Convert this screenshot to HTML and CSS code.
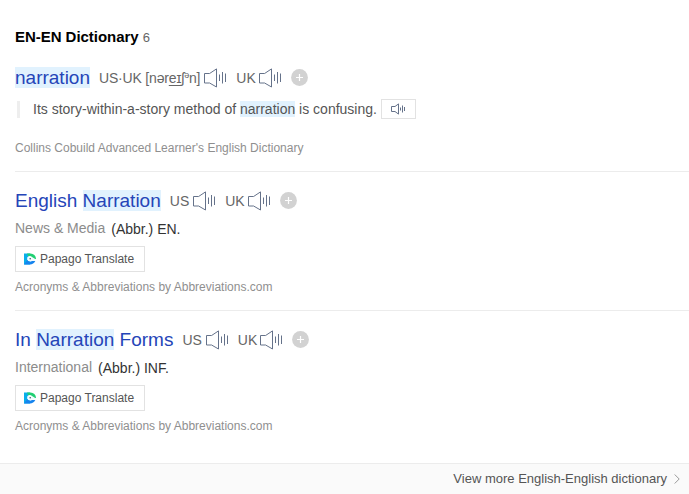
FILE: index.html
```html
<!DOCTYPE html>
<html lang="en">
<head>
<meta charset="utf-8">
<title>EN-EN Dictionary</title>
<link rel="stylesheet" href="styles.css">
</head>
<body>
<svg class="defs" aria-hidden="true">
  <symbol id="speaker" viewBox="0 0 23 20"><path d="M12.500 .9V19L5.600 15H.5V5.500h5.100z M15.500 6.500v6.500M18.500 4v11.500M21.500 5.500v8.500"/></symbol>
  <symbol id="speaker-small" viewBox="0 0 15 12"><path d="M7.500 .9v10.200L4 8.500H.5v-5H4zM9.500 4.500v3M11.500 2.500v7M13.500 4v4"/></symbol>
  <symbol id="plus" viewBox="0 0 17 17"><circle cx="8.500" cy="8.500" r="8.400" fill="#d2d2d2"/><path d="M8.500 5v7M5 8.500h7" stroke="#fff" stroke-width="1.200"/></symbol>
  <symbol id="papago" viewBox="0 0 12 12"><path d="M0 .5h6v11H0z" fill="#08aeea"/><path d="M3 .5h3.500A5.500 5.500 0 0 1 12 6H7L4 3z" fill="#20cf72"/><path d="M3.200 4.500A3 3 0 0 1 8 4l4 2.500v1H8a3 3 0 0 1-4.800-.5z" fill="#f2fcff"/><path d="M3.200 7a3.500 3.500 0 0 0 4.800 1h3.300c-1 2.200-3 3.500-5.300 3.500H0z" fill="#1684ee"/><circle cx="6.200" cy="5.700" r=".8" fill="#456"/></symbol>
</svg>
<main class="dictionary">
  <h2 class="heading">EN-EN Dictionary <span class="count">6</span></h2>
  <section class="entry first">
    <div class="title-row">
      <a class="word"><mark>narration</mark></a>
      <span class="accent phonetic">US·UK [nər<u>eɪ</u>ʃ<sup>ə</sup>n]</span><svg class="speaker"><use href="#speaker"/></svg>
      <span class="accent uk">UK</span><svg class="speaker"><use href="#speaker"/></svg>
      <svg class="plus"><use href="#plus"/></svg>
    </div>
    <div class="example"><span class="quote"></span><p>Its story-within-a-story method of <mark>narration</mark> is confusing.</p><span class="listen"><svg><use href="#speaker-small"/></svg></span></div>
    <p class="source">Collins Cobuild Advanced Learner's English Dictionary</p>
  </section>
  <section class="entry">
    <div class="title-row">
      <a class="word">English <mark>Narration</mark></a>
      <span class="accent">US</span><svg class="speaker"><use href="#speaker"/></svg>
      <span class="accent uk">UK</span><svg class="speaker"><use href="#speaker"/></svg>
      <svg class="plus"><use href="#plus"/></svg>
    </div>
    <p class="meaning"><span class="topic">News &amp; Media</span><span>(Abbr.) EN.</span></p>
    <a class="translate"><svg><use href="#papago"/></svg>Papago Translate</a>
    <p class="source">Acronyms &amp; Abbreviations by Abbreviations.com</p>
  </section>
  <section class="entry">
    <div class="title-row">
      <a class="word">In <mark>Narration</mark> Forms</a>
      <span class="accent">US</span><svg class="speaker"><use href="#speaker"/></svg>
      <span class="accent uk">UK</span><svg class="speaker"><use href="#speaker"/></svg>
      <svg class="plus"><use href="#plus"/></svg>
    </div>
    <p class="meaning"><span class="topic">International</span><span>(Abbr.) INF.</span></p>
    <a class="translate"><svg><use href="#papago"/></svg>Papago Translate</a>
    <p class="source">Acronyms &amp; Abbreviations by Abbreviations.com</p>
  </section>
</main>
<footer class="more"><span>View more English-English dictionary</span><svg viewBox="0 0 6 10"><path d="M.7.5 5.2 5 .7 9.5"/></svg></footer>
</body>
</html>
```
FILE: styles.css
```css
* { box-sizing: border-box; }
body { margin: 0; height: 494px; overflow: hidden; background: #fff; color: #333; font: 14px/20px "Liberation Sans", Arial, sans-serif; display: flex; flex-direction: column; }
p, h2 { margin: 0; }
svg { display: block; flex: none; }
.defs { position: absolute; width: 0; height: 0; }
mark { color: inherit; background: #e1f2fe; }
.dictionary { height: 463px; flex: none; padding: 27px 0 0 15px; }
.heading { color: #000; font-size: 15px; line-height: 20px; letter-spacing: -.04px; }
.count { color: #666; font-size: 13px; font-weight: 400; }
.entry { height: 139px; border-top: 1px solid #ececec; padding-top: 18px; }
.entry.first { height: 124px; border-top: 0; padding-top: 20px; margin-top: -1px; }
.title-row { display: flex; align-items: center; height: 22px; white-space: nowrap; }
.word { color: #2545b8; font-size: 19px; line-height: 22px; margin-right: 9px; }
.accent { color: #666; line-height: 20px; margin-right: 4px; }
.uk { margin: 0 3px 0 9px; }
.phonetic { letter-spacing: -.18px; }
.phonetic sup { font-size: 9px; line-height: 0; vertical-align: 5px; }
.phonetic u { text-underline-offset: 2px; }
.speaker { width: 23px; height: 20px; }
.speaker, .listen svg { fill: none; stroke: #65728a; stroke-width: 1; }
.plus { width: 17px; height: 17px; margin: -1px 0 0 9px; }
.example { display: flex; align-items: center; height: 20px; margin-top: 10px; color: #555; white-space: nowrap; }
.quote { width: 3px; height: 17px; margin: 0 13px 0 2px; background: #eee; }
.listen { display: grid; place-items: center; width: 35px; height: 20px; margin-left: 4px; border: 1px solid #e2e2e2; }
.listen svg { width: 15px; height: 12px; }
.source { color: #8f8f8f; font-size: 12px; line-height: 18px; margin-top: 6px; }
.first .source { margin-top: 20px; }
.meaning { display: flex; gap: 6px; height: 20px; margin-top: 6px; }
.meaning span:last-child { padding-top: 1px; }
.topic { color: #8c8c8c; }
.translate { display: flex; align-items: center; width: 130px; height: 26px; margin-top: 8px; padding-left: 8px; border: 1px solid #e2e2e2; color: #555; font-size: 12px; }
.translate svg { width: 12px; height: 12px; margin-right: 4px; }
.more { display: flex; align-items: center; justify-content: flex-end; height: 31px; padding-right: 9px; border-top: 1px solid #ececec; background: #fafafa; color: #555; font-size: 13px; }
.more svg { width: 6px; height: 10px; margin-left: 7px; fill: none; stroke: #999; }
```
